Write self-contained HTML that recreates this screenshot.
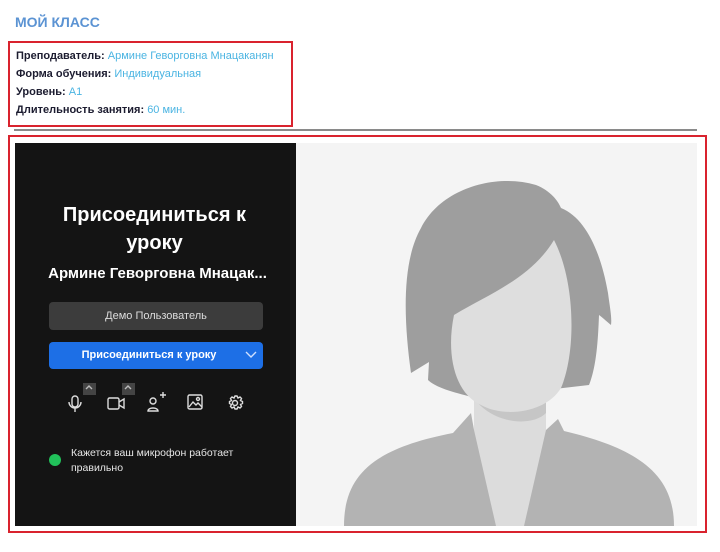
<!DOCTYPE html>
<html><head><meta charset="utf-8"><style>
*{margin:0;padding:0;box-sizing:border-box}
body{width:720px;height:552px;background:#fff;font-family:"Liberation Sans",sans-serif;position:relative;overflow:hidden}
.a{position:absolute}
h1{position:absolute;left:15px;top:14px;font-size:14px;font-weight:bold;color:#5b93d3;letter-spacing:0}
.info{left:8px;top:41px;width:285px;height:86px;border:2px solid #d9232e}
.row{position:absolute;left:6px;font-size:11px;color:#1c1c30;white-space:nowrap}
.row b{font-weight:bold}
.row span{color:#4ab4e2}
.left{left:15px;top:143px;width:281px;height:383px;background:#141414;color:#fff}
.right{left:296px;top:143px;width:401px;height:383px;background:#f4f4f4}
.t{position:absolute;width:100%;text-align:center}
</style></head><body>
<h1>МОЙ КЛАСС</h1>
<div class="a info">
<div class="row" style="top:7px"><b>Преподаватель:</b> <span>Армине Геворговна Мнацаканян</span></div>
<div class="row" style="top:25px"><b>Форма обучения:</b> <span>Индивидуальная</span></div>
<div class="row" style="top:43px"><b>Уровень:</b> <span>A1</span></div>
<div class="row" style="top:61px"><b>Длительность занятия:</b> <span>60 мин.</span></div>
</div>
<div class="a" style="left:14px;top:129px;width:683px;height:2px;background:#8a8a8a"></div>
<div class="a" style="left:8px;top:135px;width:699px;height:398px;border:2px solid #d9232e"></div>
<div class="a left">
<div class="t" style="top:58px;font-size:20px;line-height:28px;left:-1px;font-weight:bold">Присоединиться к<br>уроку</div>
<div class="t" style="top:122px;font-size:15px;font-weight:bold;left:2px">Армине Геворговна Мнацак...</div>
<div class="a" style="left:34px;top:159px;width:214px;height:28px;background:#3c3c3c;border-radius:4px;font-size:11px;text-align:center;line-height:28px;color:#ddd">Демо Пользователь</div>
<div class="a" style="left:34px;top:199px;width:214px;height:27px;background:#1d6fe6;border-radius:4px;font-size:11px;font-weight:bold;text-align:center;line-height:27px;padding-right:14px">Присоединиться к уроку
<svg class="a" style="right:6px;top:9px" width="12" height="8" viewBox="0 0 12 8"><path d="M1 1l5 5 5-5" stroke="#cfe0ff" stroke-width="1.4" fill="none"/></svg></div>
<div class="a" style="left:68px;top:240px;width:13px;height:12px;background:#444"></div>
<div class="a" style="left:107px;top:240px;width:13px;height:12px;background:#444"></div>
<svg class="a" style="left:0;top:238px" width="281" height="40" viewBox="0 0 281 40" fill="none" stroke="#ddd" stroke-width="1.4">
<path d="M71 8l3-3 3 3M110 8l3-3 3 3" stroke="#bbb"/>
<rect x="57" y="15" width="6" height="11" rx="3"/><path d="M54 21a6 6 0 0012 0M60 27v4"/>
<rect x="93" y="17" width="11" height="11" rx="1.5"/><path d="M104 21l5-3v9l-5-3"/>
<circle cx="138" cy="20" r="3"/><path d="M133 30c0-4 10-4 10 0zM145 14h6M148 11v6"/>
<rect x="173" y="14" width="14" height="14" rx="1.5"/><path d="M174 26l4-5 3 3 2-2 4 4"/><circle cx="183" cy="18" r="1.5"/>
<circle cx="220" cy="22" r="2.5"/><path d="M220 15l2 0 1 2 2-1 1.5 1.5-1 2 2 1v2l-2 1 1 2-1.5 1.5-2-1-1 2h-2l-1-2-2 1-1.5-1.5 1-2-2-1v-2l2-1-1-2 1.5-1.5 2 1z"/>
</svg>
<div class="a" style="left:34px;top:311px;width:12px;height:12px;border-radius:50%;background:#21c15a"></div>
<div class="a" style="left:56px;top:303px;font-size:10.5px;line-height:15px;color:#e6e6e6">Кажется ваш микрофон работает<br>правильно</div>
</div>
<div class="a right">
<svg width="401" height="383" viewBox="0 0 401 383">
<path d="M115 230 C108 180 105 120 125 85 C145 45 200 30 240 42 C255 48 262 58 265 65 C290 75 305 110 312 150 C314 165 316 175 315 182 C310 178 306 174 303 172 C302 200 300 225 293 242 L180 255 C160 250 140 245 132 237 L133 219 Z" fill="#9e9e9e"/>
<path d="M178 240 L250 240 L250 290 L178 290 Z" fill="#dcdcdc"/>
<path d="M178 255 C195 280 235 285 250 270 L250 250 L178 250 Z" fill="#c6c6c6"/>
<path d="M258 97 C235 135 195 150 158 172 C150 210 158 250 185 262 C208 275 250 270 265 245 C280 210 280 140 258 97 Z" fill="#dedede"/>
<path d="M48 383 C48 330 80 305 157 290 L175 270 L178 287 L250 287 L262 276 L268 288 C340 305 378 330 378 383 Z" fill="#b3b3b3"/>
<path d="M178 287 L250 287 L228 383 L200 383 Z" fill="#dcdcdc"/>
</svg>
</div>
</body></html>
